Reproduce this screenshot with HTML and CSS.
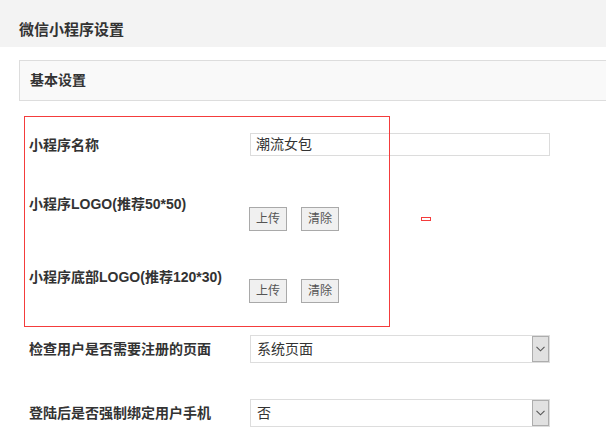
FILE: index.html
```html
<!DOCTYPE html>
<html lang="zh-CN">
<head>
<meta charset="utf-8">
<title>微信小程序设置</title>
<link rel="stylesheet" href="styles.css">
</head>
<body>
<div class="page-head">微信小程序设置</div>
<div class="panel-head">基本设置</div>
<div class="form">
  <div class="row row-name">
    <div class="label">小程序名称</div>
    <div class="control"><div class="input">潮流女包</div></div>
  </div>
  <div class="row row-logo">
    <div class="label">小程序LOGO(推荐50*50)</div>
    <div class="control buttons">
      <button class="btn">上传</button>
      <button class="btn">清除</button>
    </div>
  </div>
  <div class="row row-logo row-logo2">
    <div class="label">小程序底部LOGO(推荐120*30)</div>
    <div class="control buttons">
      <button class="btn">上传</button>
      <button class="btn">清除</button>
    </div>
  </div>
  <div class="row row-select row-check">
    <div class="label">检查用户是否需要注册的页面</div>
    <div class="control">
      <div class="select"><span class="select-text">系统页面</span><span class="arrow"><svg width="9" height="6" viewBox="0 0 9 6"><path d="M0.5 0.8 L4.5 4.8 L8.5 0.8" fill="none" stroke="#555" stroke-width="1.1"/></svg></span></div>
    </div>
  </div>
  <div class="row row-select row-bind">
    <div class="label">登陆后是否强制绑定用户手机</div>
    <div class="control">
      <div class="select"><span class="select-text">否</span><span class="arrow"><svg width="9" height="6" viewBox="0 0 9 6"><path d="M0.5 0.8 L4.5 4.8 L8.5 0.8" fill="none" stroke="#555" stroke-width="1.1"/></svg></span></div>
    </div>
  </div>
</div>
<div class="highlight"></div>
<div class="marker"></div>
</body>
</html>
```
FILE: styles.css
```css
html, body {
  margin: 0;
  padding: 0;
  background: #fff;
}
body {
  font-family: "Liberation Sans", "Noto Sans CJK SC", sans-serif;
  font-size: 14px;
  color: #333;
  width: 606px;
  height: 441px;
  overflow: hidden;
  position: relative;
}
.page-head {
  height: 47px;
  box-sizing: border-box;
  background: #f3f3f3;
  padding: 20px 0 0 19px;
  line-height: 20px;
  font-size: 15px;
  font-weight: bold;
  color: #333;
}
.panel-head {
  margin: 13px 0 0 19px;
  height: 41px;
  box-sizing: border-box;
  border: 1px solid #dddddd;
  border-right: none;
  background: #f9f9f9;
  padding-left: 10px;
  line-height: 39px;
  font-weight: bold;
  color: #333;
}
.form {
  padding-left: 29px;
  padding-top: 32px;
}
.row {
  display: flex;
  align-items: center;
}
.label {
  width: 221px;
  flex: none;
  font-weight: bold;
  line-height: 20px;
  color: #333;
}
.input {
  width: 300px;
  height: 23px;
  box-sizing: border-box;
  border: 1px solid #dcdcdc;
  padding-left: 5px;
  line-height: 21px;
  color: #333;
}
.row-logo {
  align-items: flex-start;
  margin-top: 38px;
}
.row-logo2 {
  margin-top: 36px;
}
.buttons {
  display: flex;
  gap: 14px;
  margin-top: 13px;
  margin-left: -1px;
}
.row-logo2 .buttons {
  margin-top: 12px;
}
.btn {
  width: 38px;
  height: 24px;
  box-sizing: border-box;
  border: 1px solid #a9a9a9;
  background: #f0f0f0;
  font-family: "Liberation Sans", "Noto Sans CJK SC", sans-serif;
  font-size: 12px;
  color: #555;
  padding: 0;
  line-height: 22px;
}
.row-check {
  margin-top: 32px;
}
.row-bind {
  margin-top: 36px;
}
.select {
  width: 300px;
  height: 28px;
  box-sizing: border-box;
  border: 1px solid #dddddd;
  display: flex;
  align-items: center;
  justify-content: space-between;
}
.select-text {
  padding-left: 6px;
  line-height: 26px;
  color: #333;
}
.arrow {
  width: 17px;
  height: 26px;
  box-sizing: border-box;
  border: 1px solid #adadad;
  background: #e1e1e1;
  display: flex;
  align-items: center;
  justify-content: center;
}
.highlight {
  position: absolute;
  left: 24px;
  top: 116px;
  width: 366px;
  height: 211px;
  box-sizing: border-box;
  border: 1px solid #f43c3c;
  pointer-events: none;
}
.marker {
  position: absolute;
  left: 421px;
  top: 217px;
  width: 10px;
  height: 4px;
  box-sizing: border-box;
  border: 1px solid #f43c3c;
}
```
